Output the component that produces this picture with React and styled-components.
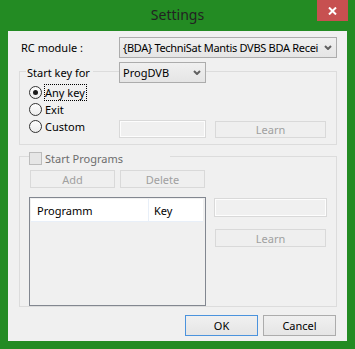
import React from "react";
import styled, { createGlobalStyle } from "styled-components";

const GlobalStyle = createGlobalStyle`
  html, body { margin: 0; padding: 0; background: #238b23; }
  body { font-family: "Noto Sans", "Open Sans", sans-serif; font-size: 11px; color: #000; }
  * { box-sizing: border-box; }
`;

const Window = styled.div`
  width: 355px;
  height: 349px;
  background: #238b23;
  display: flex;
  flex-direction: column;
`;

const TitleBar = styled.div`
  height: 31px;
  display: grid;
  grid-template-columns: 1fr auto 1fr;
  align-items: start;
`;

const Title = styled.div`
  grid-column: 2;
  font-size: 14px;
  line-height: 20px;
  padding-top: 5px;
  color: #222;
`;

const CloseButton = styled.div`
  grid-column: 3;
  justify-self: end;
  margin-right: 7px;
  width: 31px;
  height: 21px;
  background: #c75050;
  display: flex;
  align-items: center;
  justify-content: center;
`;

const Client = styled.div`
  margin: 0 8px 8px 8px;
  height: 310px;
  background: #f0f0f0;
  padding: 6px 10px 5px 11px;
  display: flex;
  flex-direction: column;
`;

const TopRow = styled.div`
  display: grid;
  grid-template-columns: 100px 1fr;
  align-items: center;
  height: 21px;
`;

const Label = styled.span`
  padding-left: ${(p) => p.$indent || 0}px;
  color: ${(p) => (p.$disabled ? "#6d6d6d" : "#000")};
  white-space: nowrap;
`;

const ComboBox = styled.div`
  height: 21px;
  width: ${(p) => (p.$width ? `${p.$width}px` : "auto")};
  border: 1px solid #acacac;
  background: linear-gradient(#f0f0f0, #e5e5e5);
  display: flex;
  align-items: center;
  padding-left: 3px;
  overflow: hidden;
`;

const ComboText = styled.span`
  flex: 1;
  white-space: nowrap;
  overflow: hidden;
  letter-spacing: ${(p) => (p.$tight ? "-0.3px" : "0")};
`;

const ComboArrow = styled.span`
  width: 16px;
  flex: none;
  display: flex;
  align-items: center;
  justify-content: center;
`;

const Group = styled.div`
  border: 1px solid #dcdcdc;
  margin-top: ${(p) => p.$top}px;
  display: flex;
  flex-direction: column;
`;

const Group1Header = styled.div`
  margin-top: -10px;
  display: grid;
  grid-template-columns: 99px 87px;
  align-items: center;
  height: 21px;
`;

const Legend = styled.span`
  justify-self: start;
  margin-left: 6px;
  padding: 0 3px 0 1px;
  background: #f0f0f0;
  line-height: 14px;
`;

const Group1Body = styled.div`
  margin-top: 1px;
  padding: 0 0 5px 9px;
  display: grid;
  grid-template-columns: 81px 87px 111px;
  grid-template-rows: 17px 17px 21px;
  column-gap: 9px;
  align-items: start;
`;

const RadioItem = styled.label`
  grid-column: 1;
  grid-row: ${(p) => p.$row};
  height: 17px;
  display: flex;
  align-items: center;
  gap: 3px;
  white-space: nowrap;
`;

const RadioCircle = styled.span`
  width: 13px;
  height: 13px;
  border-radius: 50%;
  border: 1px solid #333;
  background: linear-gradient(#fdfdfd, #ececec);
  display: flex;
  align-items: center;
  justify-content: center;
  flex: none;
  &::after {
    content: "";
    width: 5px;
    height: 5px;
    border-radius: 50%;
    background: ${(p) => (p.$checked ? "#1a1a1a" : "transparent")};
  }
`;

const FocusText = styled.span`
  outline: ${(p) => (p.$focus ? "1px dotted #000" : "none")};
  outline-offset: 0;
  line-height: 15px;
  padding: 0 1px 0 0;
`;

const TextBox = styled.div`
  grid-row: ${(p) => p.$row || "auto"};
  grid-column: ${(p) => p.$col || "auto"};
  height: ${(p) => p.$h}px;
  width: ${(p) => p.$w}px;
  margin-top: ${(p) => p.$mt || 0}px;
  border: 1px solid #d9d9d9;
  box-shadow: inset 0 0 0 1px #fdfdfd;
  background: #f0f0f0;
`;

const Button = styled.div`
  grid-row: ${(p) => p.$row || "auto"};
  grid-column: ${(p) => p.$col || "auto"};
  height: ${(p) => p.$h}px;
  width: ${(p) => p.$w}px;
  margin-top: ${(p) => p.$mt || 0}px;
  margin-left: ${(p) => p.$ml || 0}px;
  display: flex;
  align-items: center;
  justify-content: center;
  border: 1px solid
    ${(p) => (p.$disabled ? "#d9d9d9" : p.$default ? "#4b93dd" : "#acacac")};
  background: ${(p) =>
    p.$disabled ? "#efefef" : "linear-gradient(#f0f0f0, #e5e5e5)"};
  color: ${(p) => (p.$disabled ? "#a0a0a0" : "#000")};
`;

const Group2Header = styled.div`
  margin-top: -6px;
  height: 15px;
  padding-left: 9px;
  display: flex;
  align-items: center;
`;

const CheckLegend = styled.span`
  width: 141px;
  height: 15px;
  background: #f0f0f0;
  display: flex;
  align-items: center;
  gap: 3px;
`;

const CheckBox = styled.span`
  width: 13px;
  height: 13px;
  border: 1px solid #bcbcbc;
  background: #e6e6e6;
  flex: none;
`;

const Group2Body = styled.div`
  padding-left: 9px;
  margin-top: 4px;
  display: grid;
  grid-template-columns: 177px 113px;
  grid-template-rows: 18px 109px;
  column-gap: 8px;
  row-gap: 9px;
`;

const ButtonRow = styled.div`
  grid-column: 1;
  display: flex;
  gap: 5px;
`;

const ListView = styled.div`
  grid-column: 1;
  border: 1px solid #828790;
  background: #f0f0f0;
  padding: 1px 2px 0 1px;
`;

const ListHeader = styled.div`
  height: 23px;
  background: #fff;
  border-bottom: 1px solid #e8eff8;
  display: grid;
  grid-template-columns: 118px 1fr;
`;

const HeaderCell = styled.div`
  display: flex;
  align-items: center;
  padding-left: ${(p) => p.$pl}px;
  border-right: ${(p) => (p.$divider ? "1px solid #e8eff8" : "none")};
`;

const RightColumn = styled.div`
  grid-column: 2;
  display: flex;
  flex-direction: column;
`;

const Footer = styled.div`
  margin-top: 8px;
  display: flex;
  justify-content: flex-end;
  gap: 5px;
  padding-right: 1px;
`;

const Chevron = () => (
  <svg width="8" height="5" viewBox="0 0 8 5">
    <polyline
      points="1,1 4,4 7,1"
      fill="none"
      stroke="#606060"
      strokeWidth="2"
    />
  </svg>
);

const CloseX = () => (
  <svg width="9" height="8" viewBox="0 0 9 8">
    <path d="M1 0.5 L8 7.5 M8 0.5 L1 7.5" stroke="#fff" strokeWidth="2" />
  </svg>
);

export default function App() {
  return (
    <>
      <GlobalStyle />
      <Window>
        <TitleBar>
          <Title>Settings</Title>
          <CloseButton>
            <CloseX />
          </CloseButton>
        </TitleBar>
        <Client>
          <TopRow>
            <Label $indent={2}>RC module :</Label>
            <ComboBox>
              <ComboText $tight>{"{BDA} TechniSat Mantis DVBS BDA Recei"}</ComboText>
              <ComboArrow>
                <Chevron />
              </ComboArrow>
            </ComboBox>
          </TopRow>

          <Group $top={13}>
            <Group1Header>
              <Legend>Start key for</Legend>
              <ComboBox $width={87}>
                <ComboText>ProgDVB</ComboText>
                <ComboArrow>
                  <Chevron />
                </ComboArrow>
              </ComboBox>
            </Group1Header>
            <Group1Body>
              <RadioItem $row={1}>
                <RadioCircle $checked />
                <FocusText $focus>Any key</FocusText>
              </RadioItem>
              <RadioItem $row={2}>
                <RadioCircle />
                <FocusText>Exit</FocusText>
              </RadioItem>
              <RadioItem $row={3}>
                <RadioCircle />
                <FocusText>Custom</FocusText>
              </RadioItem>
              <TextBox $row={3} $col={2} $w={87} $h={18} $mt={2} />
              <Button $row={3} $col={3} $w={111} $h={17} $mt={3} $disabled>
                Learn
              </Button>
            </Group1Body>
          </Group>

          <Group $top={11}>
            <Group2Header>
              <CheckLegend>
                <CheckBox />
                <Label $disabled>Start Programs</Label>
              </CheckLegend>
            </Group2Header>
            <Group2Body>
              <ButtonRow>
                <Button $w={85} $h={18} $ml={1} $disabled>
                  Add
                </Button>
                <Button $w={85} $h={18} $disabled>
                  Delete
                </Button>
              </ButtonRow>
              <ListView>
                <ListHeader>
                  <HeaderCell $pl={6} $divider>
                    Programm
                  </HeaderCell>
                  <HeaderCell $pl={5}>Key</HeaderCell>
                </ListHeader>
              </ListView>
              <RightColumn>
                <TextBox $w={113} $h={19} $mt={1} />
                <Button $w={111} $h={18} $mt={12} $ml={1} $disabled>
                  Learn
                </Button>
              </RightColumn>
            </Group2Body>
          </Group>

          <Footer>
            <Button $w={73} $h={21} $default>
              OK
            </Button>
            <Button $w={73} $h={21}>
              Cancel
            </Button>
          </Footer>
        </Client>
      </Window>
    </>
  );
}
